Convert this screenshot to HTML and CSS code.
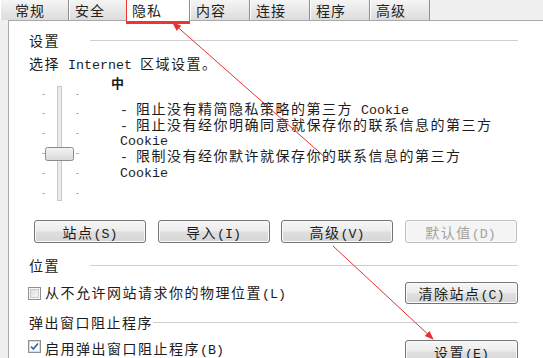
FILE: index.html
```html
<!DOCTYPE html>
<html lang="zh-CN">
<head>
<meta charset="utf-8">
<title>Internet 选项 - 隐私</title>
<link rel="stylesheet" href="styles.css">
</head>
<body>
<div class="tabs">
  <div class="tab t-first">常规</div>
  <div class="tab t-narrow">安全</div>
  <div class="tab active">隐私</div>
  <div class="tab">内容</div>
  <div class="tab">连接</div>
  <div class="tab">程序</div>
  <div class="tab">高级</div>
</div>
<div class="panel">
  <div class="group g-settings"><span class="glabel">设置</span><span class="gline"></span></div>
  <div class="intro">选择<span class="lat"> Internet </span>区域设置。</div>
  <div class="zone">
    <div class="slider">
      <svg width="82" height="148" viewBox="0 0 82 148">
        <defs>
          <linearGradient id="thumbg" x1="0" y1="0" x2="0" y2="1">
            <stop offset="0" stop-color="#f4f4f4"/>
            <stop offset="1" stop-color="#d9d9d9"/>
          </linearGradient>
        </defs>
        <g stroke="#b4b4b4" stroke-width="1">
          <line x1="13" y1="22.5" x2="16" y2="22.5"/><line x1="47" y1="22.5" x2="50" y2="22.5"/>
          <line x1="13" y1="41.5" x2="16" y2="41.5"/><line x1="47" y1="41.5" x2="50" y2="41.5"/>
          <line x1="13" y1="61.5" x2="16" y2="61.5"/><line x1="47" y1="61.5" x2="50" y2="61.5"/>
          <line x1="13" y1="81.5" x2="16" y2="81.5"/><line x1="47" y1="81.5" x2="50" y2="81.5"/>
          <line x1="13" y1="101.5" x2="16" y2="101.5"/><line x1="47" y1="101.5" x2="50" y2="101.5"/>
          <line x1="13" y1="121.5" x2="16" y2="121.5"/><line x1="47" y1="121.5" x2="50" y2="121.5"/>
        </g>
        <rect x="28.5" y="14.5" width="4" height="114" fill="#ececec" stroke="#c9c9c9"/>
        <rect x="16.5" y="75.5" width="28" height="13" rx="2" fill="url(#thumbg)" stroke="#8c8c8c"/>
      </svg>
    </div>
    <div class="desc">
      <div class="level">中</div>
      <div class="items">
        <div><span class="lat">- </span>阻止没有精简隐私策略的第三方<span class="lat"> Cookie</span></div>
        <div><span class="lat">- </span>阻止没有经你明确同意就保存你的联系信息的第三方<br><span class="lat">Cookie</span></div>
        <div><span class="lat">- </span>限制没有经你默许就保存你的联系信息的第三方<br><span class="lat">Cookie</span></div>
      </div>
    </div>
  </div>
  <div class="btnrow">
    <button class="btn">站点<span class="lat">(S)</span></button>
    <button class="btn">导入<span class="lat">(I)</span></button>
    <button class="btn">高级<span class="lat">(V)</span></button>
    <button class="btn disabled">默认值<span class="lat">(D)</span></button>
  </div>
  <div class="group g-location"><span class="glabel">位置</span><span class="gline"></span></div>
  <div class="cbrow cb-location">
    <span class="cb">
      <svg width="13" height="13" viewBox="0 0 13 13">
        <defs>
          <linearGradient id="cbg" x1="0" y1="0" x2="1" y2="1">
            <stop offset="0" stop-color="#dcdcdc"/>
            <stop offset="1" stop-color="#f7f7f7"/>
          </linearGradient>
        </defs>
        <rect x="0.5" y="0.5" width="12" height="12" fill="#fafafa" stroke="#8f8f8f"/>
        <rect x="2.5" y="2.5" width="8" height="8" fill="url(#cbg)" stroke="#c9c9c9"/>
      </svg>
    </span>
    <span class="cbtext">从不允许网站请求你的物理位置<span class="lat">(L)</span></span>
    <button class="btn wide">清除站点<span class="lat">(C)</span></button>
  </div>
  <div class="group g-popup"><span class="glabel">弹出窗口阻止程序</span><span class="gline"></span></div>
  <div class="cbrow cb-popup">
    <span class="cb">
      <svg width="13" height="13" viewBox="0 0 13 13">
        <rect x="0.5" y="0.5" width="12" height="12" fill="#f4f4f4" stroke="#8f8f8f"/>
        <rect x="1.5" y="1.5" width="10" height="10" fill="#ffffff" stroke="#dcdcdc"/>
        <path d="M3 6.5 L5.3 9 L10 3.5" fill="none" stroke="#3a64a8" stroke-width="1.8"/>
      </svg>
    </span>
    <span class="cbtext">启用弹出窗口阻止程序<span class="lat">(B)</span></span>
    <button class="btn wide">设置<span class="lat">(E)</span></button>
  </div>
</div>
<svg class="annot" width="543" height="358" viewBox="0 0 543 358">
  <defs>
    <marker id="ah" markerWidth="9" markerHeight="8" refX="8" refY="4" orient="auto" markerUnits="userSpaceOnUse">
      <path d="M0,0.5 L9,4 L0,7.5 z" fill="#e8302f"/>
    </marker>
  </defs>
  <rect x="127.5" y="1.5" width="61" height="21" fill="none" stroke="#ee3434" stroke-width="3"/>
  <line x1="327" y1="159" x2="173" y2="23" stroke="#e8302f" stroke-width="1" marker-end="url(#ah)"/>
  <line x1="333" y1="246" x2="433" y2="339" stroke="#e8302f" stroke-width="1" marker-end="url(#ah)"/>
</svg>
</body>
</html>
```

FILE: styles.css
```css
* { box-sizing: border-box; }
html, body { margin: 0; padding: 0; }
body {
  position: relative;
  width: 543px;
  height: 358px;
  overflow: hidden;
  background: #f0f0f0;
  font-family: "Noto Sans CJK SC", "Noto Sans", sans-serif;
  font-size: 14px;
  letter-spacing: 1.5px;
  color: #1c1c1c;
}
.lat {
  font-family: "Liberation Mono", monospace;
  font-size: 13.33px;
  letter-spacing: 0;
}

/* tabs */
.tabs {
  display: flex;
  align-items: flex-start;
  height: 20px;
}
.tab {
  width: 60px;
  height: 20px;
  padding-left: 6px;
  line-height: 20px;
  font-size: 14px;
  letter-spacing: 1px;
  color: #222;
  background: linear-gradient(#f5f5f5, #dcdcdc);
  border-right: 1px solid #8e8e8e;
  box-shadow: inset 1px 0 0 #ffffff;
}
.t-first { width: 69px; padding-left: 15px; }
.t-narrow { width: 58px; }
.tab.active {
  position: relative;
  z-index: 1;
  width: 63px;
  height: 21px;
  padding-left: 5px;
  background: #ffffff;
  box-shadow: none;
}

/* panel */
.panel {
  height: 338px;
  margin-left: 8px;
  padding: 11px 25px 0 20px;
  background: #ffffff;
  border-left: 1px solid #a9a9a9;
  border-top: 1px solid #a9a9a9;
}
.group {
  display: flex;
  align-items: center;
  height: 16px;
  line-height: 16px;
}
.glabel { min-width: 61px; }
.gline { flex: 1; height: 1px; background: #cfcfcf; }
.g-location { margin-top: 14px; }
.g-popup { margin-top: 10px; }

.intro {
  margin-top: 7px;
  height: 16px;
  line-height: 16px;
}

.zone {
  display: flex;
  height: 148px;
  margin-top: 1px;
}
.slider { width: 82px; flex: none; }
.slider svg { display: block; }
.desc { padding-top: 3px; }
.level {
  height: 16px;
  line-height: 16px;
  font-size: 13px;
  font-weight: bold;
  letter-spacing: 0;
}
.items {
  margin-top: 11px;
  padding-left: 9px;
  line-height: 13.7px;
}

/* buttons */
.btnrow {
  display: flex;
  gap: 11.5px;
  padding-left: 5px;
  height: 23px;
}
.btn {
  width: 112px;
  height: 23px;
  padding: 0;
  font: inherit;
  letter-spacing: 1.5px;
  color: #1c1c1c;
  border: 1px solid #747474;
  border-radius: 3px;
  background: linear-gradient(#f6f6f6 0%, #ececec 48%, #dfdfdf 52%, #d6d6d6 100%);
  box-shadow: inset 0 0 0 1px #fbfbfb;
}
.btn.disabled {
  color: #a3a3a3;
  border-color: #bfbfbf;
  background: #f4f4f4;
}
.btn.wide {
  width: 113px;
  margin-left: auto;
}

/* checkbox rows */
.cbrow {
  display: flex;
  align-items: center;
}
.cb-location { margin-top: 9px; height: 22px; }
.cb-location .btn { height: 22px; }
.cb-popup { margin-top: 10px; height: 23px; align-items: flex-start; }
.cb-popup .cb, .cb-popup .cbtext { margin-top: 0; }
.cb {
  display: block;
  width: 13px;
  height: 13px;
  margin-left: -1px;
  margin-right: 4px;
}
.cb svg { display: block; }
.cbtext { line-height: 16px; }

/* annotation overlay */
.annot {
  position: absolute;
  left: 0;
  top: 0;
  pointer-events: none;
}
```
